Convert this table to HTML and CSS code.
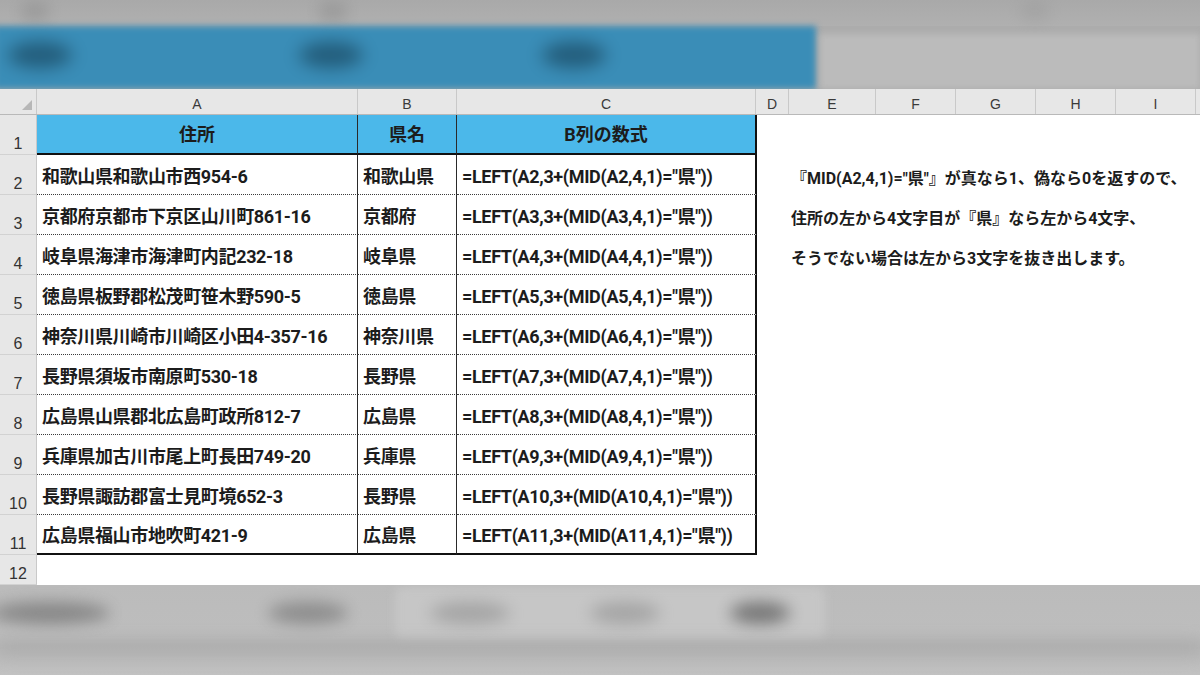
FILE: index.html
```html
<!DOCTYPE html>
<html lang="ja">
<head>
<meta charset="utf-8">
<title>県名を抜き出す数式</title>
<link rel="stylesheet" href="styles.css">
</head>
<body>
<div class="top-blur">
  <div class="top-strip">
    <span class="blob gray g1"></span>
    <span class="blob gray g2"></span>
    <span class="blob gray g3"></span>
  </div>
  <div class="top-main">
    <div class="bar">
      <span class="blob dark d1"></span>
      <span class="blob dark d2"></span>
      <span class="blob dark d3"></span>
    </div>
    <div class="pane"></div>
  </div>
</div>

<div class="sheet">
  <div class="hdr">
    <div class="corner"><span class="tri"></span></div>
    <div class="ch w-a">A</div>
    <div class="ch w-b">B</div>
    <div class="ch w-c">C</div>
    <div class="ch w-d">D</div>
    <div class="ch w-e">E</div>
    <div class="ch w-f">F</div>
    <div class="ch w-f">G</div>
    <div class="ch w-f">H</div>
    <div class="ch w-f">I</div>
    <div class="ch rest-h"></div>
  </div>

  <div class="row">
    <div class="rn">1</div>
    <div class="cell w-a head center">住所</div>
    <div class="cell w-b head center">県名</div>
    <div class="cell w-c head center last">B列の数式</div>
    <div class="rest"></div>
  </div>

  <div class="row">
    <div class="rn">2</div>
    <div class="cell w-a data">和歌山県和歌山市西954-6</div>
    <div class="cell w-b data">和歌山県</div>
    <div class="cell w-c data last">=LEFT(A2,3+(MID(A2,4,1)="県"))</div>
    <div class="rest note">『MID(A2,4,1)="県"』が真なら1、偽なら0を返すので、</div>
  </div>
  <div class="row">
    <div class="rn">3</div>
    <div class="cell w-a data">京都府京都市下京区山川町861-16</div>
    <div class="cell w-b data">京都府</div>
    <div class="cell w-c data last">=LEFT(A3,3+(MID(A3,4,1)="県"))</div>
    <div class="rest note">住所の左から4文字目が『県』なら左から4文字、</div>
  </div>
  <div class="row">
    <div class="rn">4</div>
    <div class="cell w-a data">岐阜県海津市海津町内記232-18</div>
    <div class="cell w-b data">岐阜県</div>
    <div class="cell w-c data last">=LEFT(A4,3+(MID(A4,4,1)="県"))</div>
    <div class="rest note">そうでない場合は左から3文字を抜き出します。</div>
  </div>
  <div class="row">
    <div class="rn">5</div>
    <div class="cell w-a data">徳島県板野郡松茂町笹木野590-5</div>
    <div class="cell w-b data">徳島県</div>
    <div class="cell w-c data last">=LEFT(A5,3+(MID(A5,4,1)="県"))</div>
    <div class="rest"></div>
  </div>
  <div class="row">
    <div class="rn">6</div>
    <div class="cell w-a data">神奈川県川崎市川崎区小田4-357-16</div>
    <div class="cell w-b data">神奈川県</div>
    <div class="cell w-c data last">=LEFT(A6,3+(MID(A6,4,1)="県"))</div>
    <div class="rest"></div>
  </div>
  <div class="row">
    <div class="rn">7</div>
    <div class="cell w-a data">長野県須坂市南原町530-18</div>
    <div class="cell w-b data">長野県</div>
    <div class="cell w-c data last">=LEFT(A7,3+(MID(A7,4,1)="県"))</div>
    <div class="rest"></div>
  </div>
  <div class="row">
    <div class="rn">8</div>
    <div class="cell w-a data">広島県山県郡北広島町政所812-7</div>
    <div class="cell w-b data">広島県</div>
    <div class="cell w-c data last">=LEFT(A8,3+(MID(A8,4,1)="県"))</div>
    <div class="rest"></div>
  </div>
  <div class="row">
    <div class="rn">9</div>
    <div class="cell w-a data">兵庫県加古川市尾上町長田749-20</div>
    <div class="cell w-b data">兵庫県</div>
    <div class="cell w-c data last">=LEFT(A9,3+(MID(A9,4,1)="県"))</div>
    <div class="rest"></div>
  </div>
  <div class="row">
    <div class="rn">10</div>
    <div class="cell w-a data">長野県諏訪郡富士見町境652-3</div>
    <div class="cell w-b data">長野県</div>
    <div class="cell w-c data last">=LEFT(A10,3+(MID(A10,4,1)="県"))</div>
    <div class="rest"></div>
  </div>
  <div class="row">
    <div class="rn">11</div>
    <div class="cell w-a data final">広島県福山市地吹町421-9</div>
    <div class="cell w-b data final">広島県</div>
    <div class="cell w-c data final last">=LEFT(A11,3+(MID(A11,4,1)="県"))</div>
    <div class="rest"></div>
  </div>
  <div class="row short">
    <div class="rn">12</div>
    <div class="rest"></div>
  </div>
</div>

<div class="bottom-blur">
  <span class="blob lgray k5"></span>
  <span class="blob dgray k1"></span>
  <span class="blob dgray k2"></span>
  <span class="blob dgray k3"></span>
  <span class="blob dgray k4"></span>
  <span class="blob dgray k6"></span>
  <span class="blob band k7"></span>
</div>
</body>
</html>
```

FILE: styles.css
```css
* { box-sizing: border-box; }
html, body { margin: 0; padding: 0; }
body {
  width: 1200px;
  height: 675px;
  overflow: hidden;
  background: #bcbcbc;
  font-family: "Roboto", "Noto Sans CJK JP", "Noto Sans", sans-serif;
  color: #1c1c1c;
}

/* ---------- blurred top ---------- */
.top-blur {
  height: 89px;
  display: flex;
  flex-direction: column;
  background: #acacac;
  overflow: hidden;
  position: relative;
}
.top-strip {
  height: 26px;
  position: relative;
  background: linear-gradient(#a9a9a9, #b0b0b0);
}
.top-main {
  flex: 1;
  display: flex;
}
.bar {
  width: 822px;
  position: relative;
  background: #3a8db7;
  filter: blur(3px);
  margin: 0 0 0 -6px;
}
.pane {
  flex: 1;
  background: #bbbbbb;
  margin: 8px 0 0 4px;
  filter: blur(3px);
}
.blob {
  position: absolute;
  border-radius: 50%;
  filter: blur(8px);
}
.dark { background: #1f5470; width: 64px; height: 26px; top: 16px; opacity: .85; }
.d1 { left: 14px; }
.d2 { left: 305px; }
.d3 { left: 548px; }
.gray { background: #8f8f8f; width: 30px; height: 18px; top: 2px; opacity: .7; }
.g1 { left: 20px; }
.g2 { left: 318px; }
.g3 { left: 1020px; opacity: .35; }

/* ---------- sheet ---------- */
.sheet {
  background: #ffffff;
  display: flex;
  flex-direction: column;
  height: 496px;
}
.hdr {
  height: 26px;
  display: flex;
  background: #e7e7e7;
  border-bottom: 1px solid #b9b9b9;
}
.corner {
  width: 37px;
  flex-shrink: 0;
  display: flex;
  justify-content: flex-end;
  align-items: flex-end;
  padding: 0 4px 4px 0;
  border-right: 1px solid #c9c9c9;
}
.tri {
  width: 10px;
  height: 10px;
  background: #b7b7b7;
  clip-path: polygon(100% 0, 100% 100%, 0 100%);
}
.ch {
  flex-shrink: 0;
  display: flex;
  align-items: center;
  justify-content: center;
  padding-top: 4px;
  font-family: "Liberation Sans", Arial, sans-serif;
  font-size: 14px;
  color: #3a3a3a;
  border-right: 1px solid #c9c9c9;
}
.w-a { width: 321px; }
.w-b { width: 99px; }
.w-c { width: 299px; }
.w-d { width: 33px; }
.w-e { width: 87px; }
.w-f { width: 80px; }
.rest-h { flex: 1; flex-shrink: 1; border-right: none; }

.row {
  height: 40px;
  display: flex;
}
.row.short { height: 30px; }
.rn {
  width: 37px;
  flex-shrink: 0;
  background: #e7e7e7;
  border-right: 1px solid #c9c9c9;
  border-bottom: 1px solid #d2d2d2;
  display: flex;
  align-items: flex-end;
  justify-content: center;
  padding-bottom: 1px;
  font-family: "Liberation Sans", Arial, sans-serif;
  font-size: 16px;
  color: #333333;
}
.cell {
  flex-shrink: 0;
  display: flex;
  align-items: center;
  padding-left: 5px;
  font-size: 18px;
  font-weight: 700;
  white-space: nowrap;
  border-right: 1px solid #2a2a2a;
}
.cell.last {
  width: 300px;
  border-right: 2px solid #111111;
}
.head {
  background: #4bb8ea;
  border-bottom: 2px solid #111111;
  padding-left: 0;
  padding-bottom: 2px;
}
.center { justify-content: center; }
.data {
  border-bottom: 1px dotted #3c3c3c;
  letter-spacing: -0.35px;
}
.data.final {
  border-bottom: 2px solid #111111;
}
.rest { flex: 1; min-width: 0; }
.note {
  display: flex;
  align-items: center;
  padding-left: 34px;
  padding-top: 3px;
  font-size: 16px;
  font-weight: 700;
  white-space: nowrap;
}

/* ---------- blurred bottom ---------- */
.bottom-blur {
  height: 90px;
  position: relative;
  overflow: hidden;
  background: linear-gradient(#bbbbbb 0%, #bdbdbd 50%, #b6b6b6 68%, #c2c2c2 100%);
}
.dgray { background: #7d7d7d; height: 22px; top: 17px; }
.k1 { left: -10px; width: 120px; opacity: .85; }
.k2 { left: 268px; width: 80px; opacity: .75; }
.k3 { left: 430px; width: 80px; opacity: .45; }
.k4 { left: 730px; width: 60px; background: #6e6e6e; opacity: .9; }
.k5 { left: 395px; width: 430px; height: 52px; top: 2px; background: #c6c6c6; border-radius: 8px; filter: blur(5px); }
.k6 { left: 590px; width: 70px; opacity: .45; }
.band { background: #a9a9a9; left: 0; width: 1200px; height: 14px; top: 56px; border-radius: 0; opacity: .7; }
```
